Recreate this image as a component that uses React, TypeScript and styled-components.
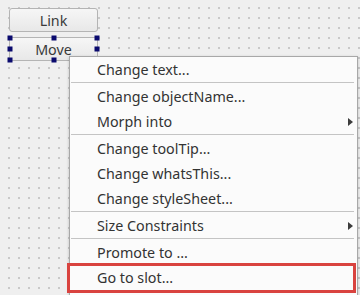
import React from "react";
import styled, { createGlobalStyle } from "styled-components";

const Global = createGlobalStyle`
  html, body { margin: 0; padding: 0; }
  body { background: #efefef; font-family: "Noto Sans", "DejaVu Sans", sans-serif; }
`;

const Canvas = styled.div`
  position: relative;
  width: 360px;
  height: 295px;
  overflow: hidden;
  background-color: #efefef;
  background-image: radial-gradient(circle, #b4b4b4 0.6px, transparent 0.9px);
  background-size: 10px 10px;
  background-position: 4px 3px;
`;

const ButtonColumn = styled.div`
  display: flex;
  flex-direction: column;
  gap: 5px;
  padding: 8px 0 0 9px;
`;

const PushButton = styled.div`
  position: relative;
  box-sizing: border-box;
  width: 89px;
  height: 24px;
  display: flex;
  align-items: center;
  justify-content: center;
  border: 1px solid #b4b4b4;
  border-radius: 3px;
  background: linear-gradient(#f6f6f6, #e8e8e8);
  color: #3a3a3a;
  font-size: 14.3px;
`;

const Handle = styled.span<{ $x: string; $y: string }>`
  position: absolute;
  width: 5px;
  height: 5px;
  background: #0a0a6e;
  left: ${(p) => p.$x};
  top: ${(p) => p.$y};
  transform: translate(-50%, -50%);
`;

const Menu = styled.div`
  position: absolute;
  left: 69px;
  top: 56px;
  width: 289px;
  box-sizing: border-box;
  padding-bottom: 10px;
  background: #fbfbfb;
  border: 1px solid #a8a8a8;
  box-shadow: 0 1px 3px rgba(0, 0, 0, 0.2);
  display: flex;
  flex-direction: column;
`;

const Item = styled.div<{ $highlight?: boolean }>`
  position: relative;
  height: 25px;
  display: flex;
  align-items: center;
  padding-left: 27px;
  font-size: 14.3px;
  color: #333333;
  &::after {
    content: "";
    display: ${(p) => (p.$highlight ? "block" : "none")};
    position: absolute;
    left: -3px;
    right: 1px;
    top: -2px;
    bottom: -3px;
    border: 3px solid #d9433f;
  }
`;

const Separator = styled.div`
  height: 1px;
  margin: 0 3px 1px 1px;
  background: #c4c4c4;
`;

const Arrow = styled.span`
  position: absolute;
  right: 4px;
  top: 50%;
  transform: translateY(-50%);
  width: 0;
  height: 0;
  border-top: 4px solid transparent;
  border-bottom: 4px solid transparent;
  border-left: 5px solid #3c3c3c;
`;

const handles: [string, string][] = [
  ["0px", "0px"], ["50%", "0px"], ["100%", "0px"],
  ["0px", "50%"], ["100%", "50%"],
  ["0px", "100%"], ["50%", "100%"], ["100%", "100%"],
];

export default function App() {
  return (
    <>
      <Global />
      <Canvas>
        <ButtonColumn>
          <PushButton>Link</PushButton>
          <PushButton>
            Move
            {handles.map(([x, y], i) => (
              <Handle key={i} $x={x} $y={y} />
            ))}
          </PushButton>
        </ButtonColumn>
        <Menu>
          <Item>Change text...</Item>
          <Separator />
          <Item>Change objectName...</Item>
          <Item>
            Morph into
            <Arrow />
          </Item>
          <Separator />
          <Item>Change toolTip...</Item>
          <Item>Change whatsThis...</Item>
          <Item>Change styleSheet...</Item>
          <Separator />
          <Item>
            Size Constraints
            <Arrow />
          </Item>
          <Separator />
          <Item>Promote to ...</Item>
          <Item $highlight>Go to slot...</Item>
        </Menu>
      </Canvas>
    </>
  );
}
